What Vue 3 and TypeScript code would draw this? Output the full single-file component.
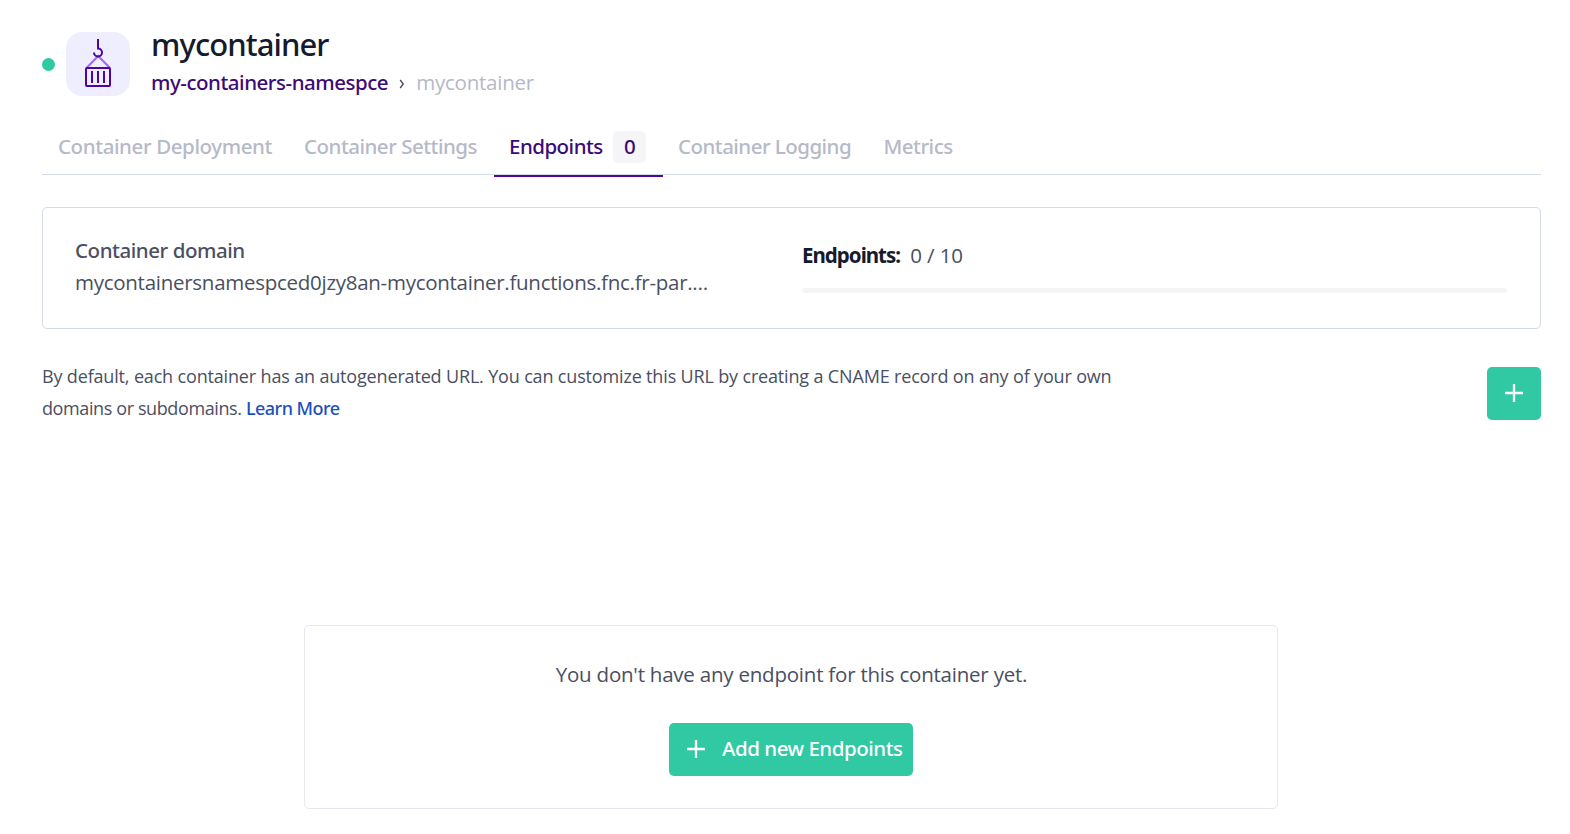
<script setup lang="ts">
interface Tab {
  label: string
  key: string
  count?: number
}

const tabs: Tab[] = [
  { label: 'Container Deployment', key: 'deployment' },
  { label: 'Container Settings', key: 'settings' },
  { label: 'Endpoints', key: 'endpoints', count: 0 },
  { label: 'Container Logging', key: 'logging' },
  { label: 'Metrics', key: 'metrics' },
]
const active = 'endpoints'
const used = 0
const quota = 10
</script>

<template>
  <main class="page">
    <header class="header">
      <span class="status"></span>
      <span class="avatar">
        <svg width="64" height="64" viewBox="0 0 64 64" fill="none">
          <path d="M20.5 36 32.2 24 44 36" stroke="#a365f6" stroke-width="2" />
          <path d="M32 7v9.5a4 4 0 1 1-4 4" stroke="#4f0599" stroke-width="2" />
          <rect x="20" y="36" width="24" height="18" rx="1" stroke="#4f0599" stroke-width="2" />
          <path d="M26 39v12M32 39v12M38 39v12" stroke="#4f0599" stroke-width="2" />
        </svg>
      </span>
      <div class="heading">
        <h1 class="title">mycontainer</h1>
        <nav class="crumbs">
          <a class="crumb-link">my-containers-namespce</a>
          <svg class="chevron" width="6" height="10" viewBox="0 0 6 10" fill="none">
            <path d="m1.2 1 3 4-3 4" stroke="#4a4f62" stroke-width="1.4" />
          </svg>
          <span class="crumb-current">mycontainer</span>
        </nav>
      </div>
    </header>

    <nav class="tabs">
      <a v-for="t in tabs" :key="t.key" class="tab" :class="[t.key, { active: t.key === active }]">
        <span>{{ t.label }}</span>
        <span v-if="t.count !== undefined" class="badge">{{ t.count }}</span>
      </a>
    </nav>

    <section class="card">
      <div class="domain">
        <div class="domain-label">Container domain</div>
        <div class="domain-value">mycontainersnamespced0jzy8an-mycontainer.functions.fnc.fr-par.…</div>
      </div>
      <div class="usage">
        <div class="usage-text"><strong>Endpoints:</strong><span class="ratio">{{ used }} / {{ quota }}</span></div>
        <div class="bar"><div class="fill" :style="{ width: (used / quota) * 100 + '%' }"></div></div>
      </div>
    </section>

    <section class="intro">
      <p class="intro-text">
        <span class="line1">By default, each container has an autogenerated URL. You can customize this URL by creating a CNAME record on any of your own</span><br />
        <span class="line2">domains or subdomains. </span><a class="learn">Learn More</a>
      </p>
      <button class="btn square" aria-label="Add">
        <svg class="plus" width="18" height="18" viewBox="0 0 18 18"><path d="M9 0v18M0 9h18" stroke="#fff" stroke-width="2.3" /></svg>
      </button>
    </section>

    <section class="empty">
      <p class="empty-text">You don't have any endpoint for this container yet.</p>
      <button class="btn wide">
        <svg class="plus" width="18" height="18" viewBox="0 0 18 18"><path d="M9 0v18M0 9h18" stroke="#fff" stroke-width="2.3" /></svg>
        <span class="btn-label">Add new Endpoints</span>
      </button>
    </section>
  </main>
</template>

<style>
body {
  background: #fff;
}
</style>

<style scoped>
.page {
  box-sizing: border-box;
  height: 834px;
  overflow: hidden;
  padding: 32px 29px 0 42px;
  font-family: 'Open Sans', 'Noto Sans', sans-serif;
  font-size: 20.5px;
  color: #4a4f62;
}
.header {
  display: flex;
  align-items: center;
  height: 64px;
}
.status {
  width: 13px;
  height: 13px;
  margin-right: 11px;
  border-radius: 50%;
  background: #30c9a4;
}
.avatar {
  width: 64px;
  height: 64px;
  border-radius: 16px;
  background: #eeeeff;
}
.avatar svg {
  display: block;
}
.heading {
  margin: -4px 0 0 21px;
}
.title {
  margin: 0;
  font: 500 31px/38px 'Noto Sans', sans-serif;
  letter-spacing: -0.92px;
  color: #151a2d;
}
.crumbs {
  display: flex;
  align-items: center;
  padding-top: 2px;
  line-height: 34px;
}
.crumb-link {
  font-family: 'Noto Sans', sans-serif;
  font-weight: 500;
  letter-spacing: -0.47px;
  color: #3c0a75;
}
.chevron {
  margin: 3px 11px 0 11px;
}
.crumb-current {
  letter-spacing: -0.22px;
  color: #b5b9c8;
}
.tabs {
  display: flex;
  height: 55px;
  margin-top: 23px;
  border-bottom: 1px solid #d4dae7;
}
.tab {
  box-sizing: border-box;
  display: flex;
  align-items: center;
  flex: none;
  height: 58px;
  padding: 0 0 2px 16px;
  border-bottom: 2px solid transparent;
  font-family: 'Noto Sans', sans-serif;
  font-weight: 500;
  color: #b5b9c8;
  white-space: nowrap;
}
.tab.deployment {
  width: 246px;
  letter-spacing: -0.4px;
}
.tab.settings {
  width: 206px;
  letter-spacing: -0.5px;
}
.tab.endpoints {
  width: 169px;
  padding-left: 15px;
  letter-spacing: -0.52px;
}
.tab.logging {
  width: 206px;
  padding-left: 15px;
  letter-spacing: -0.53px;
}
.tab.metrics {
  padding-left: 14.5px;
  letter-spacing: -0.5px;
}
.tab.active {
  border-bottom-color: #4f0599;
  color: #3c0a75;
}
.badge {
  width: 33px;
  height: 32px;
  margin: 2px 17px 0 auto;
  border-radius: 5px;
  background: #f5f5f8;
  line-height: 31px;
  text-align: center;
}
.card {
  box-sizing: border-box;
  display: flex;
  height: 122px;
  margin-top: 32px;
  padding: 26px 33px 0 32px;
  border: 1px solid #d4dae7;
  border-radius: 5px;
}
.domain {
  width: 727px;
  line-height: 32px;
  white-space: nowrap;
}
.domain-label {
  font-family: 'Noto Sans', sans-serif;
  font-weight: 500;
  letter-spacing: -0.45px;
}
.domain-value {
  letter-spacing: -0.27px;
}
.usage {
  flex: 1;
}
.usage-text {
  display: flex;
  gap: 10px;
  margin: 5px 0 17px;
  line-height: 32px;
}
.usage-text strong {
  font-family: 'Noto Sans', sans-serif;
  letter-spacing: -0.98px;
  color: #151a2d;
}
.ratio {
  letter-spacing: -0.1px;
}
.bar {
  height: 5px;
  border-radius: 3px;
  background: #f5f5f7;
  overflow: hidden;
}
.fill {
  height: 100%;
  background: #30c9a4;
}
.intro {
  display: flex;
  align-items: flex-start;
  justify-content: space-between;
  height: 64px;
  margin-top: 31px;
}
.intro-text {
  margin: 0;
  font-size: 18px;
  line-height: 32px;
  white-space: nowrap;
}
.line1 {
  letter-spacing: -0.163px;
}
.line2 {
  letter-spacing: -0.39px;
}
.learn {
  font-family: 'Noto Sans', sans-serif;
  font-weight: 500;
  letter-spacing: -0.54px;
  color: #1b51bf;
}
.btn {
  display: flex;
  align-items: center;
  height: 53px;
  padding: 0;
  border: 0;
  border-radius: 5px;
  background: #30c9a4;
  color: #fff;
}
.plus {
  margin-top: -1px;
}
.square {
  width: 54px;
  margin-top: 7px;
  justify-content: center;
}
.empty {
  box-sizing: border-box;
  display: flex;
  flex-direction: column;
  align-items: center;
  width: 974px;
  height: 184px;
  margin: 201px 0 0 262px;
  border: 1px solid #e6e7ef;
  border-radius: 5px;
}
.empty-text {
  margin: 32px 0 33px;
  padding-left: 1px;
  line-height: 32px;
  letter-spacing: -0.22px;
}
.wide {
  box-sizing: border-box;
  width: 244px;
  padding-left: 18px;
  gap: 17px;
  font: 500 20.5px/32px 'Noto Sans', sans-serif;
  letter-spacing: -0.48px;
  white-space: nowrap;
}
.btn-label {
  margin-top: -3px;
}
</style>
